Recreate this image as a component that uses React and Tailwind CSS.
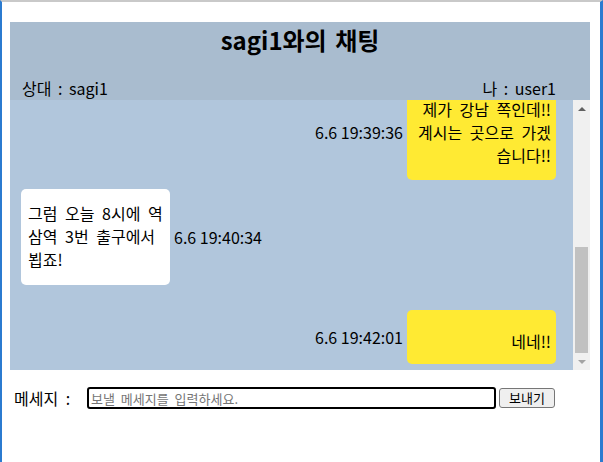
import React from 'react';

const font = { fontFamily: '"Noto Sans CJK KR", "Noto Sans", sans-serif' };

const Bubble = ({ mine, lines, className = '' }) => (
  <div
    className={`w-[149px] rounded-[5px] text-[16px] leading-[23px] text-black [word-spacing:4px] ${
      mine ? 'bg-[#ffea33] text-right pr-[5px]' : 'bg-white text-left pl-[7px]'
    } ${className}`}
  >
    {lines.map((line, i) => (
      <div key={i} className="whitespace-nowrap">{line}</div>
    ))}
  </div>
);

const Time = ({ children }) => (
  <span className="text-[16px] leading-[23px] text-black whitespace-nowrap">{children}</span>
);

const App = () => {
  return (
    <div style={font} className="w-[603px] h-[462px] bg-white border-t-2 border-t-[#c9c9c9] border-l-2 border-l-[#2b7bd0] border-r-[3px] border-r-[#2b7bd0] overflow-hidden">
      <div className="pl-[8px] pt-[20px]">
        {/* Header */}
        <div className="w-[580px] h-[78px] bg-[#a9bccf] flex flex-col">
          <h2 className="h-9 leading-9 text-[24px] font-bold text-black text-center [word-spacing:3px]">sagi1와의 채팅</h2>
          <div className="mt-[18px] flex justify-between pl-3 pr-[34px] text-[16px] leading-6 text-black [word-spacing:3px]">
            <span>상대 : sagi1</span>
            <span>나 : user1</span>
          </div>
        </div>

        {/* Chat area */}
        <div className="w-[580px] h-[270px] flex">
          <div className="w-[563px] h-full bg-[#b1c6dc] overflow-hidden">
            <div className="-mt-[15px] flex flex-col">
              <div className="flex justify-end items-center gap-[4px] pr-[17px]">
                <Time>6.6 19:39:36</Time>
                <Bubble mine className="pt-[13px] pb-[13px]" lines={['제가 강남 쪽인데!!', '계시는 곳으로 가겠', '습니다!!']} />
              </div>
              <div className="mt-[9px] flex justify-start items-center gap-[4px] pl-[11px]">
                <Bubble className="pt-[13px] pb-[14px]" lines={['그럼 오늘 8시에 역', '삼역 3번 출구에서', '뵙죠!']} />
                <Time>6.6 19:40:34</Time>
              </div>
              <div className="mt-[25px] flex justify-end items-center gap-[4px] pr-[17px]">
                <Time>6.6 19:42:01</Time>
                <Bubble mine className="h-[54px] pt-[20px]" lines={['네네!!']} />
              </div>
            </div>
          </div>

          {/* Scrollbar */}
          <div className="w-[17px] h-full bg-[#f0f0f0] flex flex-col items-center">
            <div className="h-[17px] flex items-center justify-center">
              <div className="w-0 h-0 border-l-[4px] border-r-[4px] border-b-[4px] border-l-transparent border-r-transparent border-b-[#606060]" />
            </div>
            <div className="flex-1" />
            <div className="w-[13px] h-[106px] bg-[#c1c1c1]" />
            <div className="h-[17px] flex items-center justify-center">
              <div className="w-0 h-0 border-l-[4px] border-r-[4px] border-t-[4px] border-l-transparent border-r-transparent border-t-[#a3a3a3]" />
            </div>
          </div>
        </div>

        {/* Input row */}
        <div className="mt-[16px] flex items-center">
          <span className="pl-[4px] w-[77px] text-[16px] leading-6 text-black [word-spacing:4px]">메세지 :</span>
          <input
            type="text"
            placeholder="보낼 메세지를 입력하세요."
            className="w-[409px] h-[22px] border-2 border-black rounded-[3px] px-[2px] text-[13px] [word-spacing:3px] placeholder:text-[#757575] outline-none"
            style={font}
          />
          <button
            className="ml-[3px] w-[56px] h-[20px] bg-[#efefef] border border-[#767676] rounded-[3px] text-[13px] leading-[18px] text-black"
            style={font}
          >
            보내기
          </button>
        </div>
      </div>
    </div>
  );
};

export default App;
